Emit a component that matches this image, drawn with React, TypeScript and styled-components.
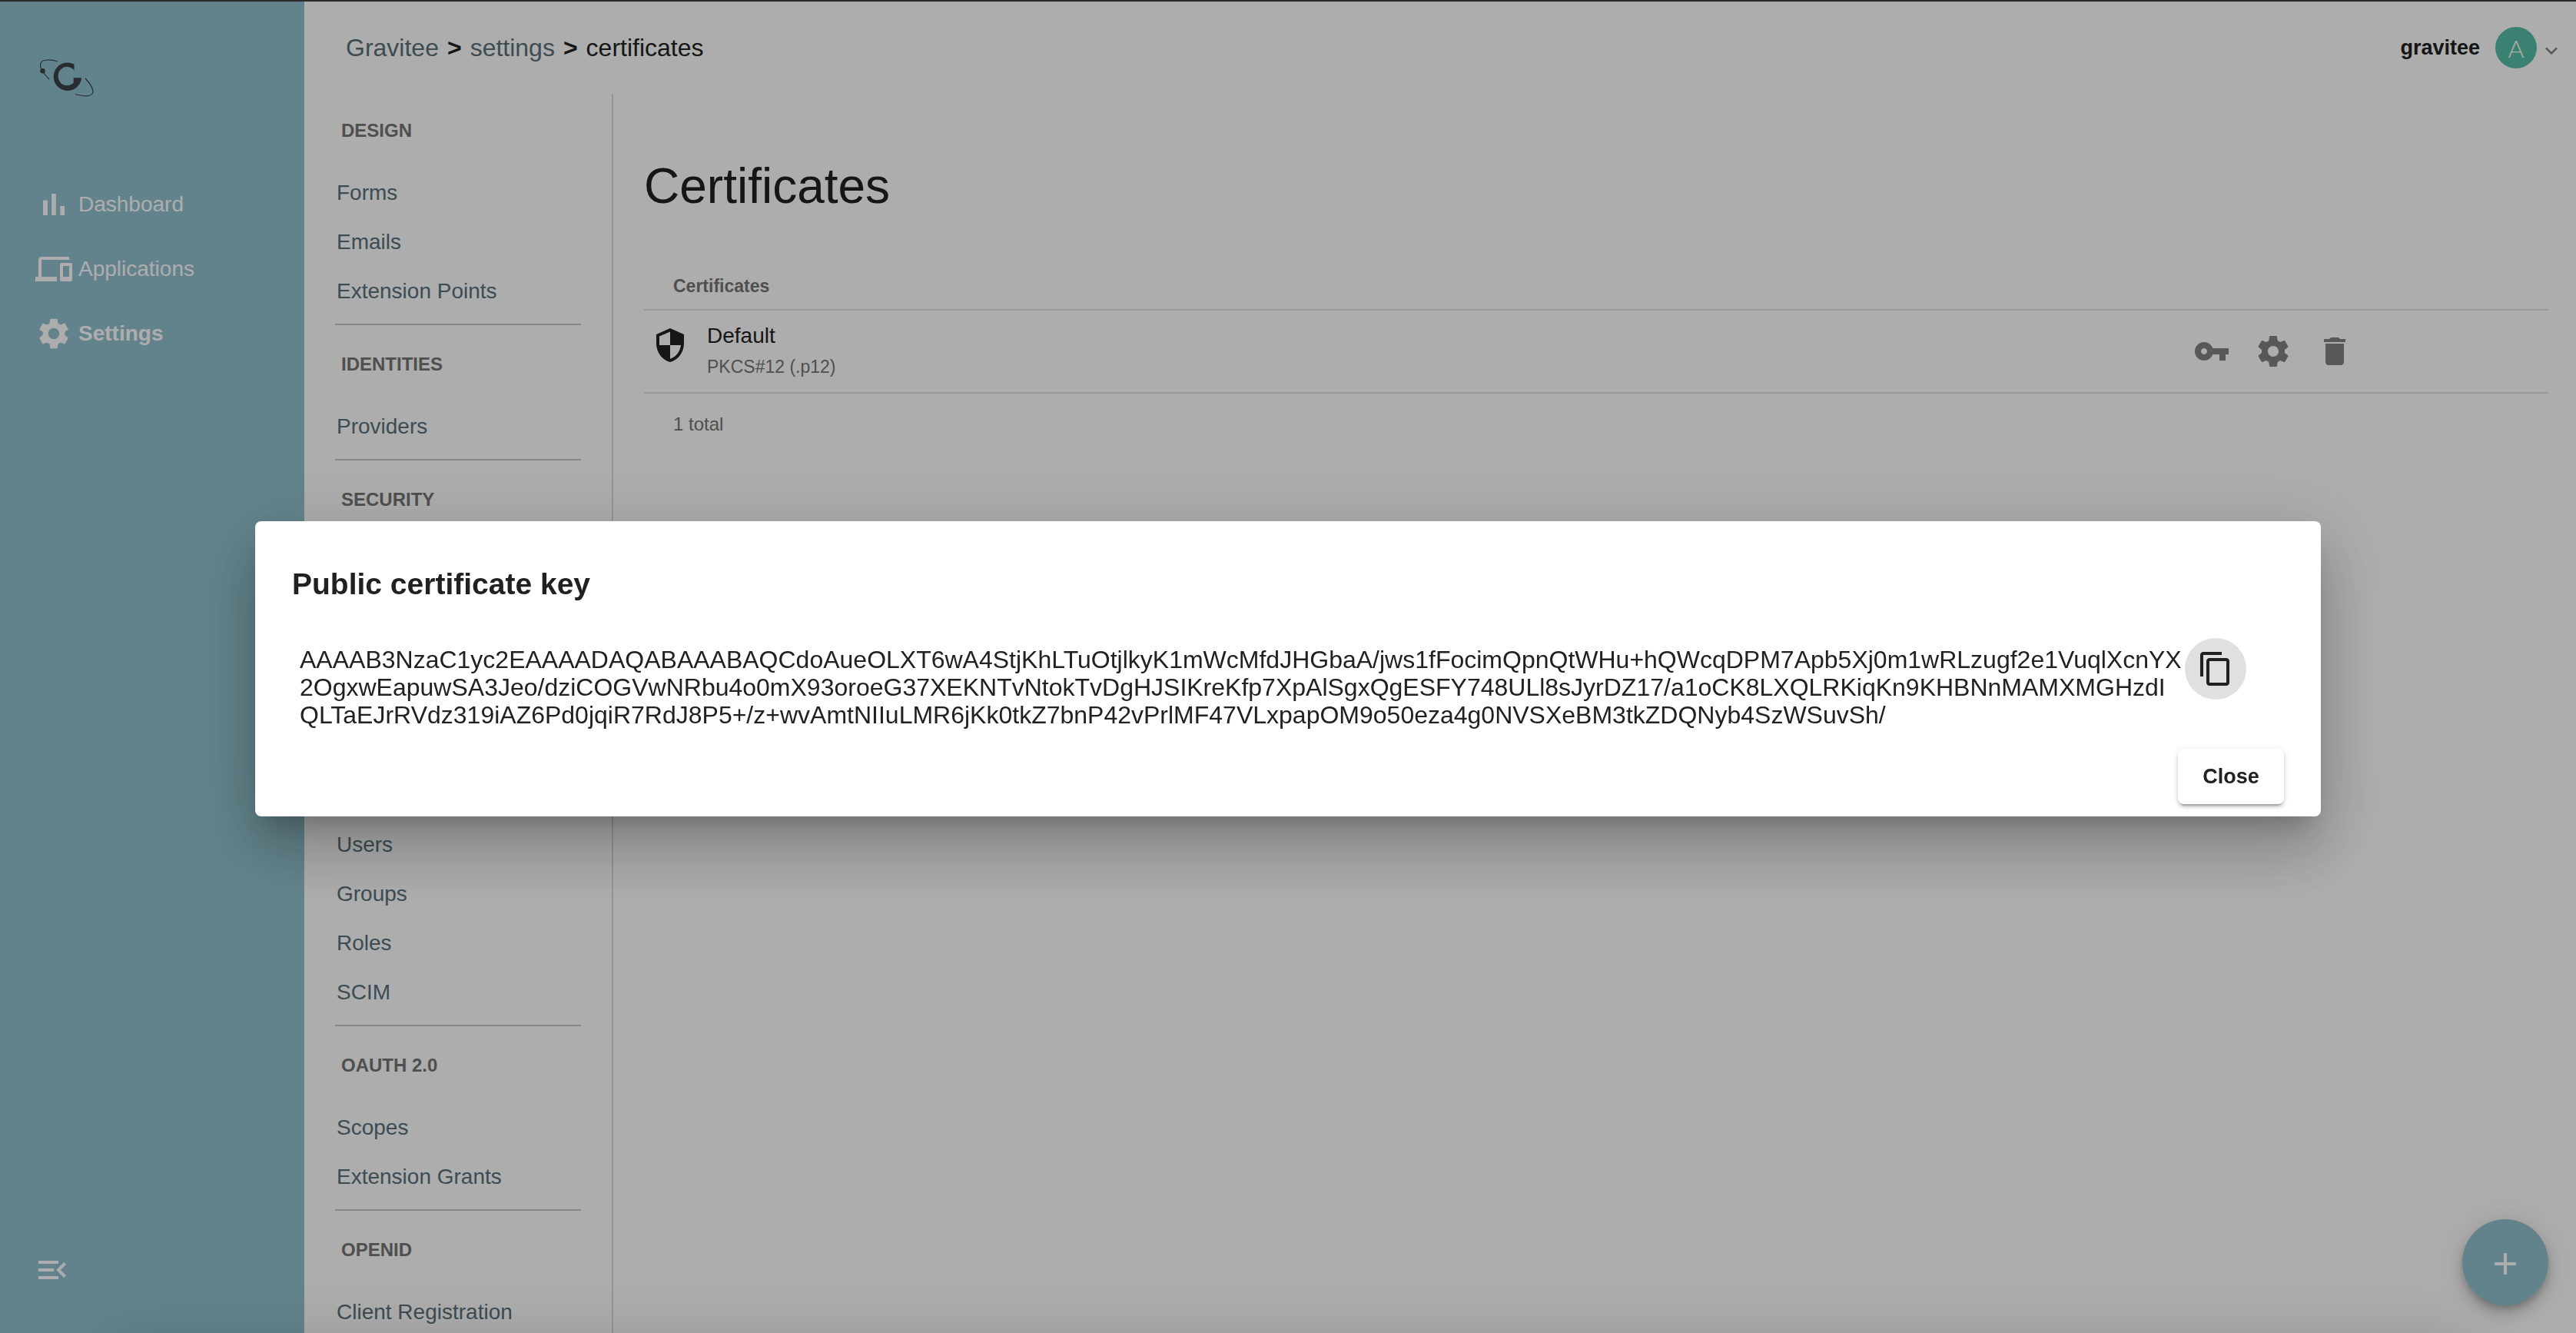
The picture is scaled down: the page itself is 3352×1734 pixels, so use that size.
import React from 'react';
import styled, { createGlobalStyle } from 'styled-components';

const GlobalStyle = createGlobalStyle`
  * { box-sizing: border-box; }
  body {
    margin: 0;
    overflow: hidden;
    font-family: "Liberation Sans", Arial, sans-serif;
    color: #212121;
    background: #fff;
  }
  button { font-family: inherit; color: inherit; border: 0; background: none; padding: 0; cursor: pointer; }
  a { text-decoration: none; color: inherit; }
`;

const Shell = styled.div`
  display: grid;
  grid-template-columns: 396px 1fr;
  height: 100vh;
  overflow: hidden;
  border-top: 2px solid #2b2a2b;
`;

const Sidebar = styled.aside`
  display: flex;
  flex-direction: column;
  justify-content: space-between;
  background: #93c2ce;
  padding: 72px 46px 58px;
`;

const LogoLink = styled.a`
  display: block;
  height: 52px;
  margin-bottom: 98px;
`;

const SideNav = styled.nav`
  display: flex;
  flex-direction: column;
`;

const SideLink = styled.a<{ $active?: boolean }>`
  display: flex;
  align-items: center;
  gap: 8px;
  height: 84px;
  font-size: 28px;
  font-weight: ${p => (p.$active ? 700 : 400)};
  color: #fff;
`;

const CollapseButton = styled.button`
  display: flex;
  width: 48px;
  height: 48px;
  margin-left: -2px;
  color: #fff;
`;

const Page = styled.div`
  display: flex;
  flex-direction: column;
  min-width: 0;
  min-height: 0;
`;

const Header = styled.header`
  display: flex;
  flex: none;
  align-items: center;
  justify-content: space-between;
  height: 120px;
  padding: 0 16px 0 54px;
`;

const Breadcrumb = styled.nav`
  display: flex;
  gap: 11px;
  font-size: 32px;
  line-height: 40px;
  a { color: #5a707b; }
`;

const Separator = styled.span`
  font-weight: 700;
`;

const UserButton = styled.button`
  display: flex;
  align-items: center;
  font-size: 27px;
  font-weight: 700;
`;

const Avatar = styled.span`
  display: flex;
  align-items: center;
  justify-content: center;
  width: 54px;
  height: 54px;
  margin: 0 3px 0 20px;
  border-radius: 50%;
  background: #56bfa8;
  color: #fff;
  font-family: Lato, "Liberation Sans", sans-serif;
  font-size: 32px;
  font-weight: 300;
`;

const Body = styled.div`
  display: grid;
  grid-template-columns: 402px 1fr;
  flex: 1;
  min-height: 0;
`;

const SubNav = styled.nav`
  overflow: hidden;
  padding: 0 40px;
  border-right: 2px solid #dcdcdc;
`;

const Section = styled.section`
  padding-bottom: 10px;
  border-bottom: 2px solid #c7c7c7;
  & + & { padding-top: 3px; }
`;

const SectionTitle = styled.h2`
  min-height: 97px;
  margin: 0;
  padding: 36px 8px 37px;
  font-size: 24px;
  line-height: 24px;
  font-weight: 700;
  color: #757575;
`;

const SectionLinks = styled.div<{ $rows: number }>`
  min-height: ${p => p.$rows * 64}px;
`;

const SubLink = styled.a`
  display: flex;
  align-items: center;
  height: 64px;
  padding: 0 2px;
  font-size: 28px;
  color: #5a707b;
`;

const Main = styled.main`
  padding: 80px 36px 0 40px;
`;

const Title = styled.h1`
  margin: 0 0 60px;
  font-size: 64px;
  line-height: 80px;
  font-weight: 400;
`;

const Table = styled.table`
  width: 100%;
  table-layout: fixed;
  border-collapse: separate;
  border-spacing: 0;
  th, td { padding: 0; text-align: left; vertical-align: middle; }
  th { height: 62px; padding-left: 38px; font-size: 23px; color: #757575; }
  th, tbody td { border-bottom: 2px solid #e0e0e0; }
  tbody td { height: 108px; }
  tfoot td { height: 80px; padding-left: 38px; font-size: 24px; color: #757575; }
`;

const NameCol = styled.col``;
const ActionsCol = styled.col`
  width: 478px;
`;

const Certificate = styled.div`
  display: flex;
  align-items: center;
  gap: 24px;
  padding-left: 10px;
`;

const ShieldBox = styled.span`
  display: flex;
  height: 64px;
`;

const CertificateText = styled.div`
  display: flex;
  flex-direction: column;
  line-height: 40px;
`;

const CertificateName = styled.span`
  font-size: 28px;
`;

const CertificateType = styled.span`
  font-size: 23px;
  color: #757575;
`;

const Actions = styled.div`
  display: flex;
`;

const IconButton = styled.button<{ $filled?: boolean }>`
  display: flex;
  flex: none;
  align-items: center;
  justify-content: center;
  width: 80px;
  height: 80px;
  border-radius: 50%;
  color: ${p => (p.$filled ? '#212121' : '#828282')};
  background: ${p => (p.$filled ? '#e0e0e0' : 'transparent')};
`;

const AddButton = styled.button`
  position: fixed;
  right: 36px;
  bottom: 36px;
  display: flex;
  align-items: center;
  justify-content: center;
  width: 112px;
  height: 112px;
  padding-top: 4px;
  border-radius: 50%;
  background: #93c2ce;
  color: #fff;
  box-shadow: 0 6px 10px -2px rgba(0, 0, 0, 0.2), 0 12px 20px rgba(0, 0, 0, 0.14), 0 2px 36px rgba(0, 0, 0, 0.12);
`;

/* Message bar parked just under the window; only its shadow shows. */
const MessageBar = styled.div`
  position: fixed;
  top: 100%;
  left: 140px;
  right: 140px;
  height: 120px;
  box-shadow: 0 18px 92px 16px rgba(0, 0, 0, 0.12), 0 48px 76px 6px rgba(0, 0, 0, 0.14);
`;

const Overlay = styled.div`
  position: fixed;
  inset: 2px 0 0;
  display: flex;
  align-items: center;
  justify-content: center;
  padding: 4px 332px 0;
  background: rgba(0, 0, 0, 0.32);
`;

const Dialog = styled.div`
  flex: 1;
  padding: 48px 48px 16px;
  border-radius: 8px;
  background: #fff;
  box-shadow: 0 22px 30px -14px rgba(0, 0, 0, 0.2), 0 48px 76px 6px rgba(0, 0, 0, 0.14), 0 18px 92px 16px rgba(0, 0, 0, 0.12);
`;

const DialogTitle = styled.h2`
  margin: 0 0 36px;
  font-size: 39px;
  line-height: 68px;
  font-weight: 700;
`;

const KeyRow = styled.div`
  display: flex;
  align-items: flex-start;
  gap: 4px;
  padding: 0 0 26px 10px;
`;

const KeyText = styled.p`
  margin: 0;
  padding-top: 10px;
  font-size: 32px;
  line-height: 36px;
  white-space: nowrap;
`;

const DialogActions = styled.div`
  display: flex;
  justify-content: flex-end;
`;

const CloseButton = styled.button`
  height: 72px;
  min-width: 138px;
  padding: 0 30px;
  border-radius: 8px;
  background: #fff;
  font-size: 27px;
  font-weight: 700;
  box-shadow: 0 6px 2px -4px rgba(0, 0, 0, 0.2), 0 4px 4px rgba(0, 0, 0, 0.14), 0 2px 10px rgba(0, 0, 0, 0.12);
`;

const Icon = ({ d, size = 48 }: { d: string; size?: number }) => (
  <svg width={size} height={size} viewBox="0 0 24 24" fill="currentColor" aria-hidden="true">
    <path d={d} />
  </svg>
);

const icons = {
  chart: 'M5 9.2h3V19H5zM10.6 5h2.8v14h-2.8zm5.6 8H19v6h-2.8z',
  devices:
    'M4 6h18V4H4c-1.1 0-2 .9-2 2v11H0v3h14v-3H4V6zm19 2h-6c-.55 0-1 .45-1 1v10c0 .55.45 1 1 1h6c.55 0 1-.45 1-1V9c0-.55-.45-1-1-1zm-1 9h-4v-7h4v7z',
  settings:
    'M19.14 12.94c.04-.3.06-.61.06-.94 0-.32-.02-.64-.07-.94l2.03-1.58c.18-.14.23-.41.12-.61l-1.92-3.32c-.12-.22-.37-.29-.59-.22l-2.39.96c-.5-.38-1.03-.7-1.62-.94l-.36-2.54c-.04-.24-.24-.41-.48-.41h-3.84c-.24 0-.43.17-.47.41l-.36 2.54c-.59.24-1.13.57-1.62.94l-2.39-.96c-.22-.08-.47 0-.59.22L2.74 8.87c-.12.21-.08.47.12.61l2.03 1.58c-.05.3-.09.63-.09.94s.02.64.07.94l-2.03 1.58c-.18.14-.23.41-.12.61l1.92 3.32c.12.22.37.29.59.22l2.39-.96c.5.38 1.03.7 1.62.94l.36 2.54c.05.24.24.41.48.41h3.84c.24 0 .44-.17.47-.41l.36-2.54c.59-.24 1.13-.56 1.62-.94l2.39.96c.22.08.47 0 .59-.22l1.92-3.32c.12-.22.07-.47-.12-.61l-2.01-1.58zM12 15.6c-1.98 0-3.6-1.62-3.6-3.6s1.62-3.6 3.6-3.6 3.6 1.62 3.6 3.6-1.62 3.6-3.6 3.6z',
  gear:
    'M19.43 12.98c.04-.32.07-.64.07-.98s-.03-.66-.07-.98l2.11-1.65c.19-.15.24-.42.12-.64l-2-3.46c-.12-.22-.39-.3-.61-.22l-2.49 1c-.52-.4-1.08-.73-1.69-.98l-.38-2.65C14.46 2.18 14.25 2 14 2h-4c-.25 0-.46.18-.49.42l-.38 2.65c-.61.25-1.17.59-1.69.98l-2.49-1c-.23-.09-.49 0-.61.22l-2 3.46c-.13.22-.07.49.12.64l2.11 1.65c-.04.32-.07.65-.07.98s.03.66.07.98l-2.11 1.65c-.19.15-.24.42-.12.64l2 3.46c.12.22.39.3.61.22l2.49-1c.52.4 1.08.73 1.69.98l.38 2.65c.03.24.24.42.49.42h4c.25 0 .46-.18.49-.42l.38-2.65c.61-.25 1.17-.59 1.69-.98l2.49 1c.23.09.49 0 .61-.22l2-3.46c.12-.22.07-.49-.12-.64l-2.11-1.65zM12 15.5c-1.93 0-3.5-1.57-3.5-3.5s1.57-3.5 3.5-3.5 3.5 1.57 3.5 3.5-1.57 3.5-3.5 3.5z',
  collapse:
    'M3 18h13v-2H3v2zm0-5h10v-2H3v2zm0-7v2h13V6H3zm18 9.59L17.42 12 21 8.41 19.59 7l-5 5 5 5L21 15.59z',
  shield:
    'M12 1L3 5v6c0 5.55 3.84 10.74 9 12 5.16-1.26 9-6.45 9-12V5l-9-4zm0 10.99h7c-.53 4.12-3.28 7.79-7 8.94V12H5V6.3l7-3.11v8.8z',
  key:
    'M12.65 10C11.83 7.67 9.61 6 7 6c-3.31 0-6 2.69-6 6s2.69 6 6 6c2.61 0 4.83-1.67 5.65-4H17v4h4v-4h2v-4H12.65zM7 14c-1.1 0-2-.9-2-2s.9-2 2-2 2 .9 2 2-.9 2-2 2z',
  trash: 'M6 19c0 1.1.9 2 2 2h8c1.1 0 2-.9 2-2V7H6v12zM19 4h-3.500l-1-1h-5l-1 1H5v2h14V4z',
  copy:
    'M16 1H4c-1.1 0-2 .9-2 2v14h2V3h12V1zm3 4H8c-1.100 0-2 .9-2 2v14c0 1.100.9 2 2 2h11c1.100 0 2-.9 2-2V7c0-1.100-.9-2-2-2zm0 16H8V7h11v14z',
  chevron: 'M7.410 11.590L12 16.170l4.590-4.580L18 13l-6 6-6-6z',
  plus: 'M19 13h-6v6h-2v-6H5v-2h6V5h2v6h6v2z',
};

const Logo = () => (
  <svg width="84" height="52" viewBox="46 74 84 52" fill="none" aria-hidden="true">
    <path d="M75 80C66 77 55 77 53 82C52 85 53 89 55 92M57 95C59 98 61 100 64 103" stroke="#3c4244" strokeWidth="1.2" />
    <path d="M111 102C118 109 123 118 120 122C117 126 107 125 98 122.500" stroke="#3c4244" strokeWidth="1.2" />
    <circle cx="55.500" cy="92.300" r="3.200" fill="#3c4244" />
    <path
      d="M96.500 83.500A18.300 18.300 0 1 0 106.200 101.200H95.700V107.500A11.700 12.200 0 1 1 96.500 91.500Z"
      fill="#3c4244"
    />
  </svg>
);

/* Sections whose links are not loaded yet keep the room of `rows` links. */
const sections: { id: string; title?: string; items: string[]; rows?: number }[] = [
  { id: 'design', title: 'DESIGN', items: ['Forms', 'Emails', 'Extension Points'] },
  { id: 'identities', title: 'IDENTITIES', items: ['Providers'] },
  { id: 'security', title: 'SECURITY', items: [], rows: 4 },
  { id: 'users', items: ['Users', 'Groups', 'Roles', 'SCIM'] },
  { id: 'oauth', title: 'OAUTH 2.0', items: ['Scopes', 'Extension Grants'] },
  { id: 'openid', title: 'OPENID', items: ['Client Registration'] },
];

const keyLines = [
  'AAAAB3NzaC1yc2EAAAADAQABAAABAQCdoAueOLXT6wA4StjKhLTuOtjlkyK1mWcMfdJHGbaA/jws1fFocimQpnQtWHu+hQWcqDPM7Apb5Xj0m1wRLzugf2e1VuqlXcnYX',
  '2OgxwEapuwSA3Jeo/dziCOGVwNRbu4o0mX93oroeG37XEKNTvNtokTvDgHJSIKreKfp7XpAlSgxQgESFY748ULl8sJyrDZ17/a1oCK8LXQLRKiqKn9KHBNnMAMXMGHzdI',
  'QLTaEJrRVdz319iAZ6Pd0jqiR7RdJ8P5+/z+wvAmtNIIuLMR6jKk0tkZ7bnP42vPrlMF47VLxpapOM9o50eza4g0NVSXeBM3tkZDQNyb4SzWSuvSh/',
];

export default function App() {
  return (
    <>
      <GlobalStyle />
      <Shell>
        <Sidebar>
          <SideNav aria-label="Main">
            <LogoLink href="#" aria-label="Home">
              <Logo />
            </LogoLink>
            <SideLink href="#dashboard">
              <Icon d={icons.chart} />
              Dashboard
            </SideLink>
            <SideLink href="#applications">
              <Icon d={icons.devices} />
              Applications
            </SideLink>
            <SideLink href="#settings" $active>
              <Icon d={icons.settings} />
              Settings
            </SideLink>
          </SideNav>
          <CollapseButton aria-label="Collapse menu">
            <Icon d={icons.collapse} />
          </CollapseButton>
        </Sidebar>
        <Page>
          <Header>
            <Breadcrumb aria-label="Breadcrumb">
              <a href="#gravitee">Gravitee</a>
              <Separator>&gt;</Separator>
              <a href="#settings">settings</a>
              <Separator>&gt;</Separator>
              <span>certificates</span>
            </Breadcrumb>
            <UserButton>
              gravitee
              <Avatar>A</Avatar>
              <svg width="32" height="32" viewBox="0 0 24 24" fill="#878787" aria-hidden="true">
                <path d={icons.chevron} />
              </svg>
            </UserButton>
          </Header>
          <Body>
            <SubNav aria-label="Settings">
              {sections.map(section => (
                <Section key={section.id}>
                  <SectionTitle>{section.title}</SectionTitle>
                  <SectionLinks $rows={section.rows ?? section.items.length}>
                    {section.items.map(item => (
                      <SubLink key={item} href="#">
                        {item}
                      </SubLink>
                    ))}
                  </SectionLinks>
                </Section>
              ))}
            </SubNav>
            <Main>
              <Title>Certificates</Title>
              <Table>
                <colgroup>
                  <NameCol />
                  <ActionsCol />
                </colgroup>
                <thead>
                  <tr>
                    <th colSpan={2}>Certificates</th>
                  </tr>
                </thead>
                <tbody>
                  <tr>
                    <td>
                      <Certificate>
                        <ShieldBox>
                          <Icon d={icons.shield} />
                        </ShieldBox>
                        <CertificateText>
                          <CertificateName>Default</CertificateName>
                          <CertificateType>PKCS#12 (.p12)</CertificateType>
                        </CertificateText>
                      </Certificate>
                    </td>
                    <td>
                      <Actions>
                        <IconButton aria-label="Public key">
                          <Icon d={icons.key} />
                        </IconButton>
                        <IconButton aria-label="Certificate settings">
                          <Icon d={icons.gear} />
                        </IconButton>
                        <IconButton aria-label="Delete certificate">
                          <Icon d={icons.trash} />
                        </IconButton>
                      </Actions>
                    </td>
                  </tr>
                </tbody>
                <tfoot>
                  <tr>
                    <td colSpan={2}>1 total</td>
                  </tr>
                </tfoot>
              </Table>
            </Main>
          </Body>
        </Page>
      </Shell>
      <AddButton aria-label="Add certificate">
        <Icon d={icons.plus} />
      </AddButton>
      <MessageBar />
      <Overlay>
        <Dialog role="dialog" aria-modal="true" aria-labelledby="dialog-title">
          <DialogTitle id="dialog-title">Public certificate key</DialogTitle>
          <KeyRow>
            <KeyText>
              {keyLines.map((line, i) => (
                <React.Fragment key={line}>
                  {i > 0 && <br />}
                  {line}
                </React.Fragment>
              ))}
            </KeyText>
            <IconButton $filled aria-label="Copy to clipboard">
              <Icon d={icons.copy} />
            </IconButton>
          </KeyRow>
          <DialogActions>
            <CloseButton>Close</CloseButton>
          </DialogActions>
        </Dialog>
      </Overlay>
    </>
  );
}
